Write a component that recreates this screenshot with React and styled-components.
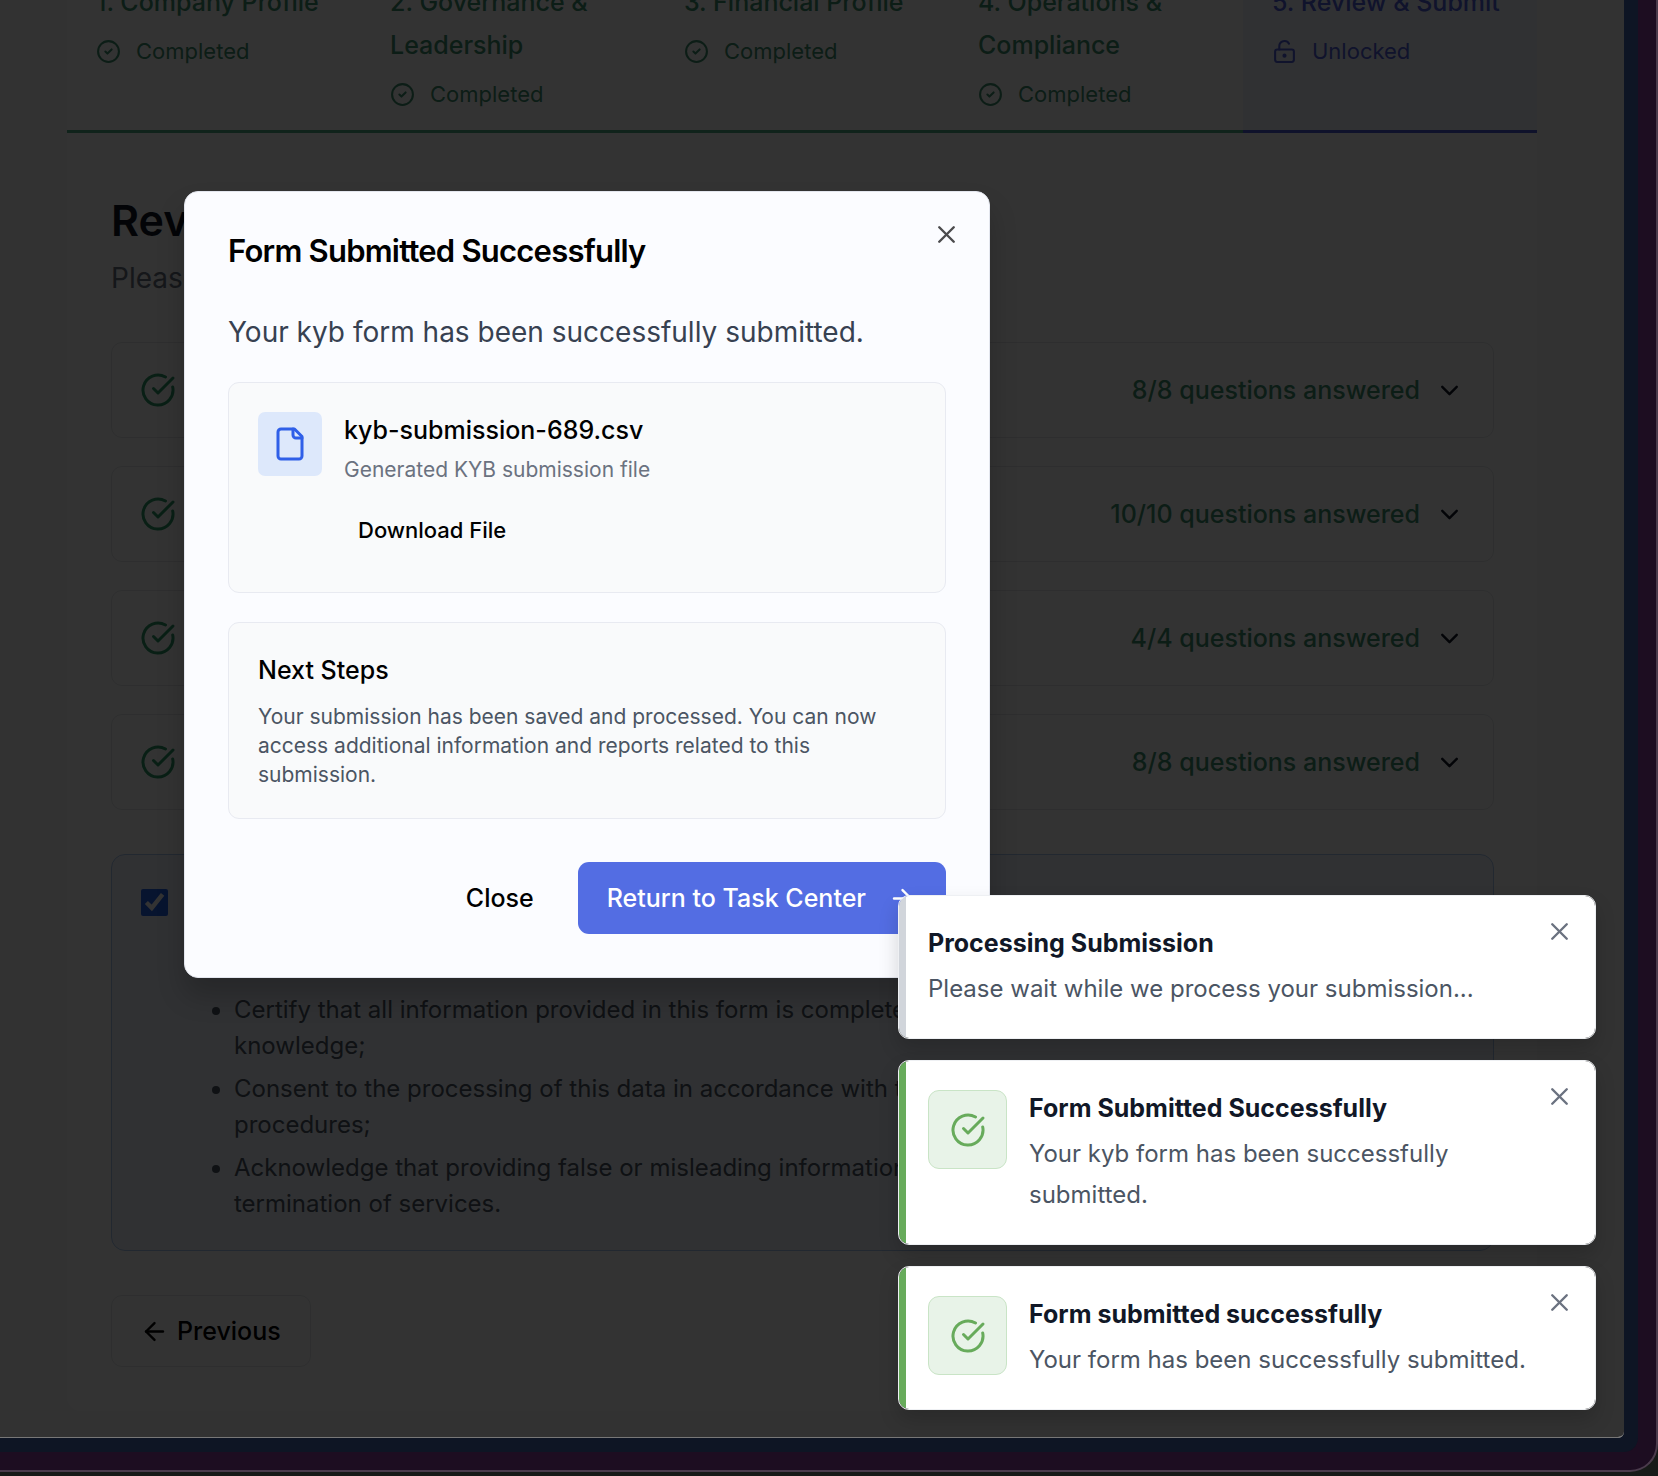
import React from 'react';
import styled, { createGlobalStyle, css } from 'styled-components';

const GlobalStyle = createGlobalStyle`
  *, *::before, *::after { box-sizing: border-box; }
  body { margin: 0; font-family: Inter, "Liberation Sans", sans-serif; background: #151515; }
  h1, h2, h3, p, ul { margin: 0; padding: 0; font-weight: inherit; }
  button { font: inherit; color: inherit; background: none; border: 0; padding: 0; cursor: pointer; }
  svg { flex: none; display: block; }
`;

/* ---------- icons ---------- */
const Svg = ({ size, children }) => (
  <svg width={size} height={size} viewBox="0 0 24 24" fill="none" stroke="currentColor"
    strokeWidth="2" strokeLinecap="round" strokeLinejoin="round" aria-hidden="true">{children}</svg>
);
const CircleCheck = () => <Svg size={25}><circle cx="12" cy="12" r="10" /><path d="m9 12 2 2 4-4" /></Svg>;
const Unlock = () => (
  <Svg size={25}><circle cx="12" cy="16" r="1" /><rect width="18" height="12" x="3" y="10" rx="2" /><path d="M7 10V7a5 5 0 0 1 9.33-2.5" /></Svg>
);
const CheckBig = () => <Svg size={36}><path d="M21.801 10A10 10 0 1 1 17 3.335" /><path d="m9 11 3 3L22 4" /></Svg>;
const Chevron = () => <Svg size={29}><path d="m6 9 6 6 6-6" /></Svg>;
const Cross = () => <Svg size={29}><path d="M18 6 6 18" /><path d="m6 6 12 12" /></Svg>;
const ArrowLeft = () => <Svg size={29}><path d="m12 19-7-7 7-7" /><path d="M19 12H5" /></Svg>;
const ArrowRight = () => <Svg size={29}><path d="M5 12h14" /><path d="m12 5 7 7-7 7" /></Svg>;
const FileIcon = () => (
  <Svg size={36}><path d="M15 2H6a2 2 0 0 0-2 2v16a2 2 0 0 0 2 2h12a2 2 0 0 0 2-2V7Z" /><path d="M14 2v4a2 2 0 0 0 2 2h4" /></Svg>
);

/* ---------- window chrome ---------- */
const Desktop = styled.div`
  height: 100vh;
  padding-bottom: 4px;
  background: #171a18;
  overflow: hidden;
`;
const Shell = styled.div`
  height: 100%;
  padding: 0 18px 18px 0;
  background: #1d0d21;
  border: solid #4b3b4c;
  border-width: 0 2px 2px 0;
  border-bottom-right-radius: 28px;
`;
const Bezel = styled.div`
  height: 100%;
  padding: 0 14px 14px 0;
  background: #0e1524;
  border-bottom-right-radius: 14px;
`;
const Page = styled.div`
  position: relative;
  height: 100%;
  background: #f9fafb;
  border-bottom: 1px solid #777777;
  border-bottom-right-radius: 6px;
  overflow: hidden;
`;

/* ---------- form page ---------- */
const FormCard = styled.main`
  margin: 0 87px 28px 67px;
  background: #fff;
  border-radius: 0 0 14px 14px;
`;
const Tabs = styled.nav`
  display: grid;
  grid-template-columns: repeat(5, 1fr);
  height: 133px;
`;
const Tab = styled.div`
  display: flex;
  flex-direction: column;
  padding-left: 29px;
  border-bottom: 3px solid ${p => (p.$active ? '#4b5bd6' : '#4fae85')};
  background: ${p => (p.$active ? '#eff6ff' : 'transparent')};
  color: ${p => (p.$active ? '#4f5fdc' : '#3f9070')};
`;
const TabTitle = styled.h2`
  margin-top: -19px;
  font-size: 25px;
  line-height: 43px;
  font-weight: 500;
`;
const TabStatus = styled.div`
  display: flex;
  align-items: center;
  gap: 15px;
  padding-top: 11px;
  font-size: 22px;
  line-height: 32px;
`;
const Body = styled.div`
  padding: 62px 43px 44px 44px;
`;
const Heading = styled.h1`
  font-size: 43px;
  line-height: 50px;
  font-weight: 600;
  color: #111827;
`;
const Lead = styled.p`
  margin: 13px 0 44px;
  font-size: 28px;
  line-height: 40px;
  color: #6b7280;
`;
const Sections = styled.div`
  display: grid;
  gap: 28px;
`;
const SectionRow = styled.button`
  display: flex;
  align-items: center;
  gap: 15px;
  height: 96px;
  padding: 0 29px 0 28px;
  border: 1px solid #e5e7eb;
  border-radius: 11px;
  font-size: 25px;
  font-weight: 500;
  color: #111827;
`;
const Tick = styled.span`
  color: #2f9b6c;
`;
const Answered = styled.span`
  margin-left: auto;
  color: #3f9070;
`;
const Consent = styled.section`
  display: flex;
  align-items: flex-start;
  gap: 26px;
  margin: 44px 0;
  padding: 29px 29px 28px;
  background: #eff6ff;
  border: 1px solid #a9c6f0;
  border-radius: 14px;
  font-size: 24px;
  line-height: 36px;
  color: #4b5563;
`;
const Checkbox = styled.input`
  width: 27px;
  height: 27px;
  margin: 5px 0 0;
  flex: none;
  accent-color: #2563eb;
`;
const ConsentLabel = styled.label`
  display: block;
  margin-bottom: 72px;
`;
const Terms = styled.ul`
  display: grid;
  gap: 7px;
  padding-left: 40px;
  white-space: pre-line;
`;
const OutlineButton = styled.button`
  display: inline-flex;
  align-items: center;
  gap: 8px;
  height: 72px;
  padding: 0 29px 0 28px;
  border: 1px solid #e5e7eb;
  border-radius: 11px;
  font-size: 25px;
  font-weight: 500;
`;
const Scrim = styled.div`
  position: absolute;
  inset: 0;
  background: rgba(0, 0, 0, 0.8);
`;

/* ---------- dialog ---------- */
const Dialog = styled.section`
  position: absolute;
  left: 184px;
  top: 191px;
  width: 806px;
  padding: 43px;
  background: #fbfcff;
  border: 1px solid #e3e6ee;
  border-radius: 14px;
  box-shadow: 0 18px 28px rgba(0, 0, 0, 0.2);
`;
const closeButton = css`
  position: absolute;
  display: flex;
`;
const DialogClose = styled.button`
  ${closeButton}
  top: 28px;
  right: 28px;
  color: #4b4b4d;
`;
const DialogTitle = styled.h2`
  font-size: 31px;
  line-height: 32px;
  font-weight: 600;
  letter-spacing: -0.025em;
`;
const DialogText = styled.p`
  margin: 44px 0 28px;
  font-size: 28px;
  line-height: 43px;
  color: #374151;
`;
const Panel = styled.div`
  display: flex;
  flex-direction: ${p => (p.$stack ? 'column' : 'row')};
  align-items: flex-start;
  gap: ${p => (p.$stack ? '14px' : '22px')};
  padding: 29px;
  margin-bottom: 29px;
  background: #f9fafb;
  border: 1px solid #e8eaf1;
  border-radius: 11px;
`;
const FileBadge = styled.span`
  padding: 14px;
  border-radius: 7px;
  background: #dde8fb;
  color: #2f5fe8;
`;
const PanelTitle = styled.h3`
  font-size: 25px;
  line-height: 36px;
  font-weight: 500;
`;
const PanelText = styled.p`
  font-size: 21px;
  line-height: 29px;
  color: ${p => (p.$muted ? '#6b7280' : '#4b5563')};
`;
const FileCaption = styled(PanelText)`
  margin-top: 7px;
`;
const Download = styled.button`
  height: 58px;
  margin: 17px 0 4px;
  padding: 0 14px;
  font-size: 22px;
  font-weight: 500;
`;
const Actions = styled.div`
  display: flex;
  justify-content: flex-end;
  gap: 15px;
  margin-top: 43px;
  font-size: 25px;
  font-weight: 500;
`;
const GhostButton = styled.button`
  height: 72px;
  padding: 0 29px;
`;
const PrimaryButton = styled.button`
  display: flex;
  align-items: center;
  gap: 22px;
  height: 72px;
  padding: 0 29px;
  border-radius: 11px;
  background: #536de3;
  color: #fff;
`;

/* ---------- toasts ---------- */
const Toasts = styled.div`
  position: absolute;
  right: 28px;
  bottom: 27px;
  width: 698px;
  display: grid;
  gap: 21px;
`;
const ToastBox = styled.div`
  position: relative;
  display: flex;
  align-items: flex-start;
  gap: 22px;
  padding: 29px 42px 29px 29px;
  border: 1px solid #eef0f3;
  border-radius: 11px;
  background: linear-gradient(to right, ${p => (p.$success ? '#67ab5b' : '#d1d5db')} 7px, #fff 7px) padding-box;
  box-shadow: 0 10px 20px rgba(0, 0, 0, 0.16);
`;
const ToastIcon = styled.span`
  display: grid;
  place-items: center;
  flex: none;
  width: 79px;
  height: 79px;
  border: 1px solid #c9e4c6;
  border-radius: 11px;
  background: #e8f3e8;
  color: #67ab5b;
`;
const ToastTitle = styled.h3`
  margin-bottom: 7px;
  font-size: 25px;
  line-height: 36px;
  font-weight: 700;
  color: #111827;
`;
const ToastText = styled.p`
  font-size: 24px;
  line-height: 41px;
  color: #4b5563;
`;
const ToastClose = styled.button`
  ${closeButton}
  top: 21px;
  right: 21px;
  color: #6b7280;
`;

const tabs = [
  { title: '1. Company Profile' },
  { title: '2. Governance & Leadership' },
  { title: '3. Financial Profile' },
  { title: '4. Operations & Compliance' },
  { title: '5. Review & Submit', active: true },
];
const sections = [
  ['Company Profile', '8/8'],
  ['Governance & Leadership', '10/10'],
  ['Financial Profile', '4/4'],
  ['Operations & Compliance', '8/8'],
];
const terms = [
  'Certify that all information provided in this form is complete and accurate to the best of my\nknowledge;',
  'Consent to the processing of this data in accordance with the applicable policies and\nprocedures;',
  'Acknowledge that providing false or misleading information may result in the\ntermination of services.',
];

const Toast = ({ title, text, success }) => (
  <ToastBox role="status" $success={success}>
    {success && <ToastIcon><CheckBig /></ToastIcon>}
    <div>
      <ToastTitle>{title}</ToastTitle>
      <ToastText>{text}</ToastText>
    </div>
    <ToastClose aria-label="Dismiss"><Cross /></ToastClose>
  </ToastBox>
);

export default function App() {
  return (
    <Desktop>
      <GlobalStyle />
      <Shell><Bezel><Page>
        <FormCard>
          <Tabs>
            {tabs.map(t => (
              <Tab key={t.title} $active={t.active}>
                <TabTitle>{t.title}</TabTitle>
                <TabStatus>
                  {t.active ? <Unlock /> : <CircleCheck />}
                  {t.active ? 'Unlocked' : 'Completed'}
                </TabStatus>
              </Tab>
            ))}
          </Tabs>
          <Body>
            <Heading>Review</Heading>
            <Lead>Please review</Lead>
            <Sections>
              {sections.map(([name, count]) => (
                <SectionRow key={name} aria-label={`${name}, ${count} questions answered`}>
                  <Tick><CheckBig /></Tick>
                  <Answered>{count} questions answered</Answered>
                  <Chevron />
                </SectionRow>
              ))}
            </Sections>
            <Consent>
              <Checkbox id="consent" type="checkbox" defaultChecked />
              <div>
                <ConsentLabel htmlFor="consent">I agree</ConsentLabel>
                <Terms>{terms.map(t => <li key={t}>{t}</li>)}</Terms>
              </div>
            </Consent>
            <OutlineButton><ArrowLeft />Previous</OutlineButton>
          </Body>
        </FormCard>
        <Scrim />
        <Dialog role="dialog" aria-labelledby="dialog-title">
          <DialogTitle id="dialog-title">Form Submitted Successfully</DialogTitle>
          <DialogText>Your kyb form has been successfully submitted.</DialogText>
          <Panel>
            <FileBadge><FileIcon /></FileBadge>
            <div>
              <PanelTitle>kyb-submission-689.csv</PanelTitle>
              <FileCaption $muted>Generated KYB submission file</FileCaption>
              <Download>Download File</Download>
            </div>
          </Panel>
          <Panel $stack>
            <PanelTitle>Next Steps</PanelTitle>
            <PanelText>
              Your submission has been saved and processed. You can now access additional
              information and reports related to this submission.
            </PanelText>
          </Panel>
          <Actions>
            <GhostButton>Close</GhostButton>
            <PrimaryButton>Return to Task Center<ArrowRight /></PrimaryButton>
          </Actions>
          <DialogClose aria-label="Close dialog"><Cross /></DialogClose>
        </Dialog>
        <Toasts>
          <Toast title="Processing Submission" text="Please wait while we process your submission..." />
          <Toast success title="Form Submitted Successfully" text="Your kyb form has been successfully submitted." />
          <Toast success title="Form submitted successfully" text="Your form has been successfully submitted." />
        </Toasts>
      </Page></Bezel></Shell>
    </Desktop>
  );
}
